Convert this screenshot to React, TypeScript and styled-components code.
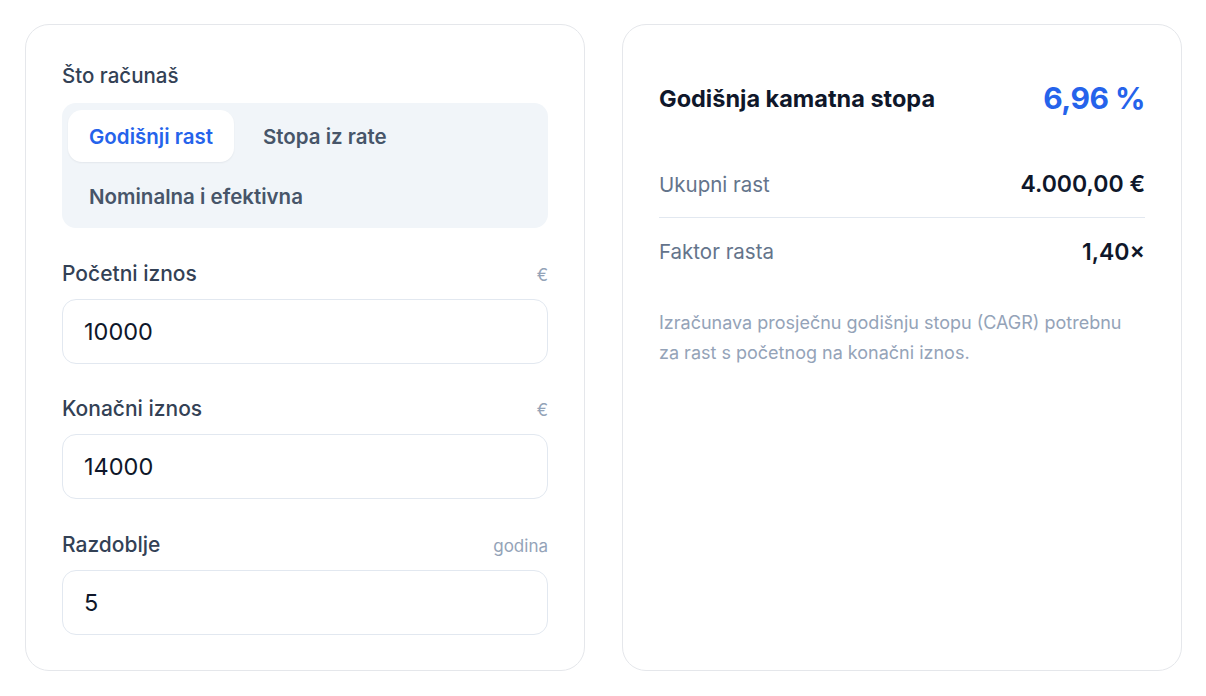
import React, { useState } from 'react'
import styled, { createGlobalStyle } from 'styled-components'

const GlobalStyle = createGlobalStyle`
  html, body {
    margin: 0;
    padding: 0;
    background: #ffffff;
    font-family: Inter, "Noto Sans", sans-serif;
    -webkit-font-smoothing: antialiased;
  }
  * { box-sizing: border-box; }
`

const MODES = ['Godišnji rast', 'Stopa iz rate', 'Nominalna i efektivna']

const FIELDS = [
  { label: 'Početni iznos', unit: '€', value: '10000' },
  { label: 'Konačni iznos', unit: '€', value: '14000' },
  { label: 'Razdoblje', unit: 'godina', value: '5' },
]

const App = () => {
  const [mode, setMode] = useState(0)
  return (
    <>
      <GlobalStyle />
      <Page>
        <Card>
          <SectionLabel>Što računaš</SectionLabel>
          <Segments>
            {MODES.map((m, i) => (
              <Segment key={m} $active={i === mode} onClick={() => setMode(i)}>
                {m}
              </Segment>
            ))}
          </Segments>
          {FIELDS.map((f) => (
            <Field key={f.label}>
              <FieldHead>
                <FieldLabel>{f.label}</FieldLabel>
                <Unit>{f.unit}</Unit>
              </FieldHead>
              <Input defaultValue={f.value} inputMode="decimal" />
            </Field>
          ))}
        </Card>

        <Card>
          <Headline>
            <HeadTitle>Godišnja kamatna stopa</HeadTitle>
            <BigValue>6,96 %</BigValue>
          </Headline>
          <Row>
            <RowLabel>Ukupni rast</RowLabel>
            <RowValue>4.000,00 €</RowValue>
          </Row>
          <Row $last>
            <RowLabel>Faktor rasta</RowLabel>
            <RowValue>1,40×</RowValue>
          </Row>
          <Note>
            Izračunava prosječnu godišnju stopu (CAGR) potrebnu
            <br />
            za rast s početnog na konačni iznos.
          </Note>
        </Card>
      </Page>
    </>
  )
}

export default App

const Page = styled.div`
  display: grid;
  grid-template-columns: 560px 560px;
  gap: 37px;
  padding: 24px 0 0 25px;
`

const Card = styled.div`
  height: 647px;
  border: 1px solid #e5e7eb;
  border-radius: 24px;
  padding: 36px 36px;
  display: flex;
  flex-direction: column;
`

const SectionLabel = styled.div`
  font-size: 20.5px;
  line-height: 30px;
  font-weight: 500;
  color: #334155;
  margin-bottom: 12px;
`

const Segments = styled.div`
  display: flex;
  flex-wrap: wrap;
  gap: 8px;
  padding: 7px 6px 6px;
  background: #f1f5f9;
  border-radius: 14px;
`

const Segment = styled.button<{ $active?: boolean }>`
  height: 52px;
  padding: 0 21px;
  border: none;
  border-radius: 14px;
  font-family: inherit;
  font-size: 20.5px;
  font-weight: 600;
  cursor: pointer;
  background: ${(p) => (p.$active ? '#ffffff' : 'transparent')};
  color: ${(p) => (p.$active ? '#2563eb' : '#475569')};
  box-shadow: ${(p) => (p.$active ? '0 1px 2px rgba(15, 23, 42, 0.06)' : 'none')};
`

const Field = styled.div`
  margin-top: 33.5px;
  display: flex;
  flex-direction: column;
  gap: 12px;
`

const FieldHead = styled.div`
  display: flex;
  justify-content: space-between;
  align-items: baseline;
  line-height: 24px;
`

const FieldLabel = styled.span`
  font-size: 21px;
  font-weight: 500;
  color: #334155;
`

const Unit = styled.span`
  font-size: 17px;
  color: #94a3b8;
`

const Input = styled.input`
  height: 65px;
  width: 100%;
  border: 1px solid #e2e8f0;
  border-radius: 14px;
  padding: 0 21px;
  font-family: inherit;
  font-size: 23.5px;
  color: #0f172a;
  background: #ffffff;
  outline: none;
`

const Headline = styled.div`
  display: flex;
  justify-content: space-between;
  align-items: center;
  margin-top: 17px;
  height: 40px;
  margin-bottom: 33px;
`

const HeadTitle = styled.span`
  font-size: 23.5px;
  font-weight: 700;
  color: #0f172a;
`

const BigValue = styled.span`
  font-size: 30px;
  font-weight: 700;
  letter-spacing: -0.5px;
  color: #2563eb;
`

const Row = styled.div<{ $last?: boolean }>`
  display: flex;
  justify-content: space-between;
  align-items: center;
  height: 67px;
  border-bottom: ${(p) => (p.$last ? 'none' : '1px solid #e2e8f0')};
`

const RowLabel = styled.span`
  font-size: 20.5px;
  color: #64748b;
`

const RowValue = styled.span`
  font-size: 23px;
  font-weight: 600;
  color: #0f172a;
`

const Note = styled.p`
  margin: 23px 0 0;
  font-size: 18px;
  line-height: 30px;
  color: #94a3b8;
`
